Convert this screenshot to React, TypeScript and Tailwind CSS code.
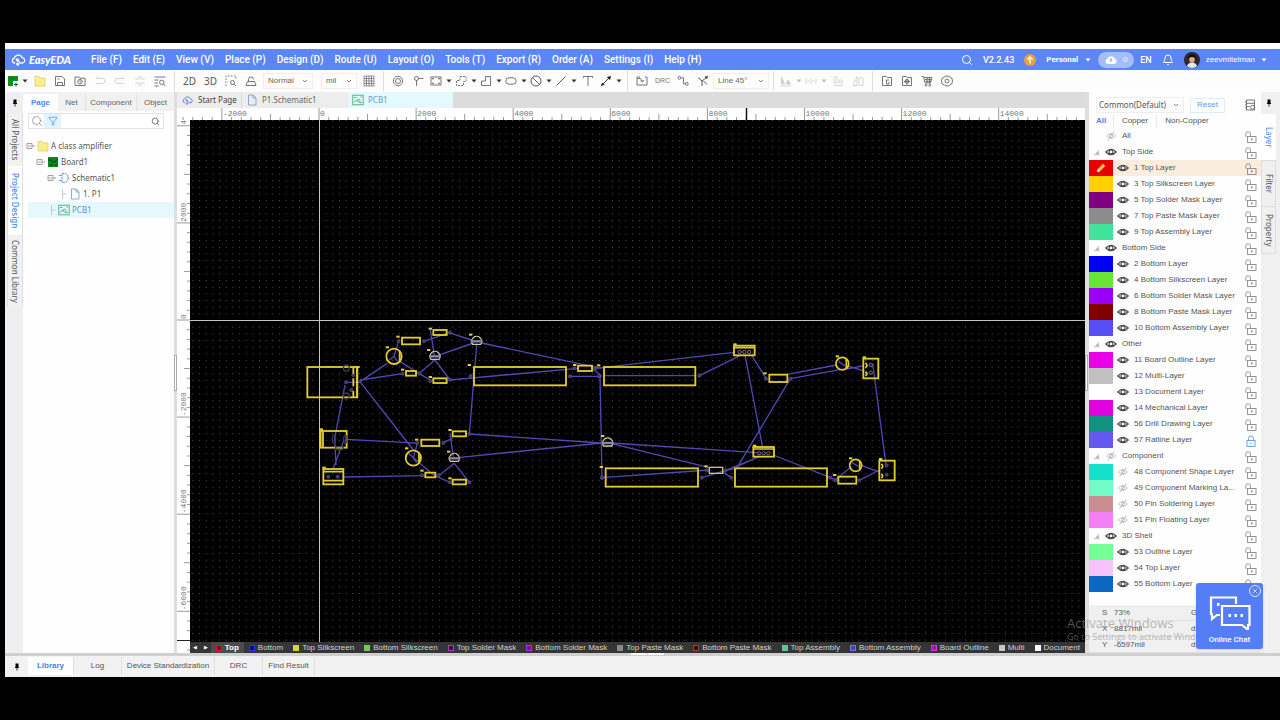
import React from "react";
import { Bell, Search, Funnel, X } from "lucide-react";

const SANS = "font-['Liberation_Sans',Arial,sans-serif]";
const NOTO = "font-['Noto_Sans','Open_Sans',sans-serif]";

/* ---------- icons ---------- */

type IconProps = { children: React.ReactNode; className?: string };

function Icon({ children, className = "size-3 text-[#666]" }: IconProps) {
  return (
    <svg viewBox="0 0 12 12" fill="none" stroke="currentColor" strokeWidth="0.9" className={`${className} shrink-0`} aria-hidden="true">
      {children}
    </svg>
  );
}

function Caret({ className = "text-[#333]" }: { className?: string }) {
  return (
    <svg viewBox="0 0 6 4" className={`h-1 w-[6px] shrink-0 ${className}`} aria-hidden="true">
      <path d="M0.5 0.5h5L3 3.5z" fill="currentColor" />
    </svg>
  );
}

function Eye({ off = false }: { off?: boolean }) {
  if (off) {
    return (
      <Icon className="size-3 text-[#bbb]">
        <path d="M1.5 6Q6 1 10.5 6Q6 11 1.5 6zM2.500 10.500L9.500 1.500" />
        <circle cx="6" cy="6" r="1.600" />
      </Icon>
    );
  }
  return (
    <Icon className="size-3 text-[#444]">
      <path d="M0.800 6Q6 0.800 11.200 6Q6 11.200 0.800 6z" strokeWidth="1.100" />
      <circle cx="6" cy="6" r="2" strokeWidth="1.100" />
    </Icon>
  );
}

function Lock({ closed = false }: { closed?: boolean }) {
  if (closed) {
    return (
      <Icon className="size-3 text-[#5b9be8]">
        <rect x="2" y="5.500" width="8" height="6" />
        <path d="M3.500 5.500V3.500a2.500 2.500 0 0 1 5 0v2M6 7.500v2" />
      </Icon>
    );
  }
  return (
    <Icon className="size-3 text-[#8a8a8a]">
      <rect x="2.500" y="5.500" width="8.500" height="6" />
      <path d="M0.800 5.800V3a2.300 2.300 0 0 1 4.600 0v2.500" />
      <path d="M6.700 7.300v2" strokeWidth="1.500" />
    </Icon>
  );
}

function Pin() {
  return (
    <svg viewBox="0 0 6 8" className="h-2 w-[6px] text-black" fill="currentColor" aria-hidden="true">
      <path d="M1.500 0.500h3v3.500h0.500v1H3.400v2.500h-0.800V5H1V4h0.500z" />
    </svg>
  );
}

function CloudLogo({ className }: { className: string }) {
  return (
    <svg viewBox="0 0 18 14" fill="none" stroke="currentColor" strokeWidth="1.500" className={className} aria-hidden="true">
      <path d="M4.500 10.500H3.800A2.900 2.900 0 0 1 3.500 4.800A5 5 0 0 1 12.800 4.300A3.200 3.200 0 0 1 13.500 10.500H10.500L7.500 7.500" />
      <circle cx="7" cy="6.800" r="1.200" />
      <circle cx="7.500" cy="11.800" r="1.200" />
    </svg>
  );
}

function FolderIcon() {
  return (
    <svg viewBox="0 0 12 12" className="size-3 shrink-0" aria-hidden="true">
      <path d="M1 1.500h4l1 1.500h5v8H1z" fill="#fbee8e" stroke="#d9c95a" strokeWidth="0.700" />
    </svg>
  );
}

function BoardIcon() {
  return (
    <svg viewBox="0 0 12 12" className="size-3 shrink-0" aria-hidden="true">
      <rect x="1" y="1" width="10" height="10" fill="#0b8a1c" />
      <path d="M1 4h3l1.500 2H8l1.500-2H11M3 9h3M8 9h2" stroke="#063f0d" strokeWidth="1" fill="none" />
    </svg>
  );
}

function PageIcon() {
  return (
    <Icon className="size-3 text-[#7f9fd8]">
      <path d="M2.500 1h4.500l3 3v7h-7.500zM7 1v3h3" />
    </Icon>
  );
}

function PcbIcon() {
  return (
    <Icon className="size-3 text-[#4aae7a]">
      <rect x="0.800" y="1.200" width="10.400" height="9.600" />
      <path d="M2 3.500h2.500M8.500 3h1.500M2 8.500L4 6.200h1.500M7.500 8.500h2.500" />
      <circle cx="6.600" cy="6.600" r="1.400" />
    </Icon>
  );
}

function SchematicIcon() {
  return (
    <Icon className="size-3 text-[#5f8fc8]">
      <path d="M4 1.500h3.500q2.500 1 2.500 4.500t-2.500 4.500H4zM1 3.500h3M1 8.500h3M10 6h1.500" strokeDasharray="2.500 0.500" />
    </Icon>
  );
}

/* ---------- header ---------- */

const MENUS = [
  "File (F)", "Edit (E)", "View (V)", "Place (P)", "Design (D)", "Route (U)",
  "Layout (O)", "Tools (T)", "Export (R)", "Order (A)", "Settings (I)", "Help (H)",
];

function Header() {
  return (
    <header className="flex h-[21px] shrink-0 items-center bg-[#5c86f6] pr-[13px] pl-[6px] text-white">
      <a href="#home" className="flex w-20 items-center gap-[2px]">
        <CloudLogo className="h-3 w-4" />
        <span className="font-['Lato',sans-serif] text-[11px] leading-3 font-black italic">EasyEDA</span>
      </a>
      <nav className="flex gap-[11px] font-['Roboto',sans-serif] text-[10px] leading-3 font-medium">
        {MENUS.map((m) => (
          <button key={m} type="button" className="whitespace-nowrap">{m}</button>
        ))}
      </nav>
      <div className="ml-auto flex items-center text-[8px] leading-3 font-bold">
        <button type="button" aria-label="Search" className="mr-[10px]"><Search className="size-3" strokeWidth={2} /></button>
        <span className="mr-[10px] font-['Roboto',sans-serif] text-[9px] font-medium">V2.2.43</span>
        <svg viewBox="0 0 12 12" className="mr-[10px] size-3" aria-hidden="true">
          <circle cx="6" cy="6" r="6" fill="#e9a13b" />
          <path d="M6 9.500V3M3.200 5.600L6 2.800l2.800 2.800" fill="none" stroke="#fff" strokeWidth="1.300" />
        </svg>
        <button type="button" className="mr-[7px] flex items-center gap-[7px] font-['Roboto',sans-serif]">Personal <Caret className="text-white" /></button>
        <button type="button" className="mr-[6px] flex h-4 w-9 items-center justify-center gap-[6px] rounded-full bg-[#a5bdfa] font-normal">
          <svg viewBox="0 0 12 10" className="h-[10px] w-3" aria-hidden="true">
            <path d="M3 9a2.800 2.800 0 0 1-0.400-5.500A3.700 3.700 0 0 1 9.500 3.500A2.800 2.800 0 0 1 9.300 9z" fill="#fff" />
            <path d="M6 3.800v3.400M4.600 5.200L6 3.800l1.400 1.400" fill="none" stroke="#7f9ff5" strokeWidth="1" />
          </svg>
          0
        </button>
        <button type="button" className="mr-[10px] font-['Roboto',sans-serif] text-[9px] font-medium">EN</button>
        <button type="button" aria-label="Notifications" className="mr-[10px]"><Bell className="size-3" strokeWidth={2} /></button>
        <svg viewBox="0 0 16 16" className="mr-[6px] size-4" aria-hidden="true">
          <circle cx="8" cy="8" r="8" fill="#2a2730" />
          <path d="M3 14q1-3.500 5-3.500t5 3.500a8 8 0 0 1-10 0z" fill="#e9e6ea" />
          <ellipse cx="8" cy="7.300" rx="2.800" ry="3.500" fill="#e3a98f" />
          <path d="M4 8Q3.500 2.500 8 2.500T12 8Q11 5 8 5T4 8z" fill="#120e12" />
        </svg>
        <button type="button" className={`flex items-center gap-[6px] font-normal ${SANS}`}>
          zeevmitelman <Caret className="text-white" />
        </button>
      </div>
    </header>
  );
}

/* ---------- toolbar ---------- */

function Tool({ label, children, wide = false, faded = false }: { label: string; children: React.ReactNode; wide?: boolean; faded?: boolean }) {
  return (
    <button
      type="button"
      aria-label={label}
      className={`flex h-5 shrink-0 items-center justify-center ${wide ? "w-[25px] gap-1" : "w-5"} ${faded ? "opacity-30" : ""}`}
    >
      {children}
      {wide && <Caret />}
    </button>
  );
}

function Separator() {
  return <span className="mx-1 h-5 w-px shrink-0 bg-[#ddd]" />;
}

function ToolSelect({ label, value, className }: { label: string; value: string; className: string }) {
  return (
    <label className={`relative flex h-4 shrink-0 items-center border border-[#eee] ${className}`} aria-label={label}>
      <select aria-label={label} defaultValue={value} className={`h-[14px] w-full appearance-none bg-transparent pl-1 text-[8px] leading-[14px] text-[#666] outline-none ${SANS}`}>
        <option>{value}</option>
      </select>
      <svg viewBox="0 0 6 4" className="pointer-events-none absolute right-1 h-1 w-[6px] text-[#888]" fill="none" stroke="currentColor" aria-hidden="true">
        <path d="M1 1l2 2 2-2" />
      </svg>
    </label>
  );
}

function Toolbar() {
  return (
    <div className="flex h-[22px] shrink-0 items-center overflow-hidden bg-[#fdfdfd] text-[10px] text-[#555]">
      <button type="button" aria-label="New" className="flex h-5 w-[25px] shrink-0 items-center justify-center gap-[3px]">
        <svg viewBox="0 0 12 12" className="size-3" aria-hidden="true">
          <path d="M1 1h10v5H6v5H1z" fill="#0f8f22" />
          <path d="M7 9.500h4M9 7.500v4M3 3h3l2 2" stroke="#1a5f22" strokeWidth="1" fill="none" />
        </svg>
        <Caret />
      </button>
      <Tool label="Open"><FolderIcon /></Tool>
      <Tool label="Save"><Icon><path d="M1.500 1.500h6.500l2.500 2.500v6.500h-9zM3.500 10.500V7.500h5v3M3.500 4h2" /></Icon></Tool>
      <Tool label="Save as"><Icon><path d="M1 2h4l1 1.200h5v7.300H1z" /><circle cx="6" cy="6.700" r="2.300" /><path d="M6 5.300v1.600h1" /></Icon></Tool>
      <Tool label="Undo" faded><Icon><path d="M2 3.500h6.500a2 2 0 0 1 0 5H2M4 1.500l-2 2" /></Icon></Tool>
      <Tool label="Redo" faded><Icon><path d="M10 3.500H3.500a2 2 0 0 0 0 5H10M8 1.500l2 2" /></Icon></Tool>
      <Tool label="Array" faded><Icon><path d="M1 4h4V1M7 1v3h4M1 8h4v3M7 11V8h4" /></Icon></Tool>
      <Tool label="Find"><Icon><path d="M0.500 2h11M0.500 5h4M0.500 8h3.500M0.500 11h4" /><circle cx="7.800" cy="7.300" r="2.200" /><path d="M9.500 9l1.800 2" /></Icon></Tool>
      <Separator />
      <button type="button" className={`w-[21px] shrink-0 ${NOTO}`}>2D</button>
      <button type="button" className={`w-[21px] shrink-0 ${NOTO}`}>3D</button>
      <Tool label="Zoom area"><Icon><path d="M1 11V1h10v4" strokeDasharray="1.500 1.500" /><circle cx="7.500" cy="7.500" r="2" /><path d="M9 9l2 2" /></Icon></Tool>
      <Tool label="Grade"><Icon><path d="M1 10.500h10L9.500 6.500h-7zM3.500 6.500V4.500a2.500 2.500 0 0 1 5 0" /></Icon></Tool>
      <ToolSelect label="Mode" value="Normal" className="mr-2 ml-[2px] w-[50px]" />
      <ToolSelect label="Unit" value="mil" className="w-9 mr-[2px]" />
      <Tool label="Grid">
        <Icon><path d="M1 1h10v10H1zM1 3.500h10M1 6h10M1 8.500h10M3.500 1v10M6 1v10M8.500 1v10" strokeWidth="0.700" /></Icon>
      </Tool>
      <Separator />
      <Tool label="Via"><Icon><circle cx="6" cy="6" r="4.700" /><circle cx="6" cy="6" r="2.500" /></Icon></Tool>
      <Tool label="Pad"><Icon><circle cx="4.500" cy="3.500" r="2" /><path d="M4.500 5.500v5.500M6.500 3.500h5" /></Icon></Tool>
      <Tool label="Board outline" wide><Icon><rect x="1" y="2" width="10" height="8" /><path d="M2.500 4.500v-1h1.500M8 3.500h1.500v1M9.500 7.500v1H8M4 8.500H2.500v-1" /></Icon></Tool>
      <Tool label="Copper area" wide><Icon><path d="M5 1.500h6v5H8.500v4h-7v-5H5z" strokeDasharray="2 1" /></Icon></Tool>
      <Tool label="Fill region" wide><Icon><path d="M5.500 1.500h5v9h-9V6h4z" /></Icon></Tool>
      <Tool label="Slot" wide><Icon><rect x="0.800" y="2.800" width="10.400" height="6.400" rx="3.200" /></Icon></Tool>
      <Tool label="Keepout" wide><Icon className="size-3 text-[#444]"><circle cx="6" cy="6" r="5" /><path d="M2.500 2.500l7 7" /></Icon></Tool>
      <Tool label="Line" wide><Icon className="size-3 text-[#444]"><path d="M1.500 10.500l9-9" /></Icon></Tool>
      <Tool label="Text"><Icon><path d="M1.500 3V1.500h9V3M6 1.500V11" /></Icon></Tool>
      <Tool label="Measure" wide><Icon className="size-3 text-[#222]"><path d="M2 10l8-8M10.500 1.500l-3 0.800 2.200 2.200zM1.500 10.500l1-2.500 1.500 1.500z" fill="currentColor" /></Icon></Tool>
      <Separator />
      <Tool label="Import changes"><Icon><path d="M4 2H1v8h10V2H9M1.500 3.500Q5 2 6.500 6.500M4.500 5.500l2 1.500 1.200-2" /></Icon></Tool>
      <button type="button" className={`w-[21px] shrink-0 text-[7px] text-[#777] ${SANS}`}>DRC</button>
      <Tool label="Route"><Icon><circle cx="2.500" cy="2.800" r="1.400" /><path d="M4 2.800h2.500v6h2" /><circle cx="9.800" cy="8.800" r="1.400" /></Icon></Tool>
      <Tool label="Autoroute"><Icon className="size-3 text-[#444]"><path d="M1 2.500l4 3.500v5M5 6l5-4M10.500 1.200L8 2l1.700 1.700zM6.500 6l3.500 3.500" /></Icon></Tool>
      <ToolSelect label="Corner" value="Line 45°" className="w-14" />
      <Separator />
      <Tool label="Align" wide faded><Icon><path d="M1 11h10M1.500 9V2l3 7zM6 9h5L8 5z" fill="currentColor" /></Icon></Tool>
      <Tool label="Distribute" wide faded><Icon><path d="M1 3v6M6 3v6M11 3v6M2.500 6h2M7.500 6h2" /></Icon></Tool>
      <Tool label="Group" faded><Icon><path d="M1.500 10.500h9M2 8h3V2H2zM7 8h3V5H7z" /></Icon></Tool>
      <Tool label="Ungroup" faded><Icon><path d="M5 1.500v9H1l4-9M7 10.500V3h4v7.500z" /></Icon></Tool>
      <Separator />
      <Tool label="Gerber"><Icon><path d="M1.500 1.500h4l1 1h4v8h-9z" /><path d="M8 5H5.500v4H8V7" /></Icon></Tool>
      <Tool label="Pick and place"><Icon><path d="M1.500 1.500h4l1 1h4v8h-9z" /><circle cx="6" cy="6.500" r="2" /><path d="M6 3.500v6M3 6.500h6" /></Icon></Tool>
      <Tool label="Order"><Icon><path d="M0.500 1.500h2l1.500 6.500h5.500l1.500-5.500H3M4 4.500h6.500M4.500 6.300h5.500M6 2.500v5.500M8.500 2.500v5.500" /><circle cx="5" cy="10.200" r="0.900" /><circle cx="8.800" cy="10.200" r="0.900" /></Icon></Tool>
      <Tool label="Settings"><Icon><path d="M4 1.200h4l1 1.300 1.800 0.500 0.700 3-0.700 3-1.800 0.500-1 1.300H4L3 9.500 1.200 9 0.500 6l0.700-3L3 2.500z" /><circle cx="6" cy="6" r="2" /></Icon></Tool>
    </div>
  );
}

/* ---------- left side ---------- */

const SIDE_TABS = [
  { label: "All Projects", cls: "h-[53px] bg-[#f1f1f1] text-[#555]" },
  { label: "Project Design", cls: "h-[69px] bg-white font-medium text-[#3f86e8]" },
  { label: "Common Library", cls: "h-[72px] bg-[#f1f1f1] text-[#555]" },
];

const TREE = [
  { label: "A class amplifier", indent: "pl-[3px]", icon: <FolderIcon />, node: true },
  { label: "Board1", indent: "pl-[13px]", icon: <BoardIcon />, node: true },
  { label: "Schematic1", indent: "pl-[24px]", icon: <SchematicIcon />, node: true },
  { label: "1. P1", indent: "pl-[35px]", icon: <PageIcon />, node: false },
  { label: "PCB1", indent: "pl-[24px]", icon: <PcbIcon />, node: false, active: true },
];

function LeftPanel() {
  return (
    <aside className="flex shrink-0">
      <div className="flex w-[18px] flex-col bg-[#eeeff1] pl-[2px]">
        <button type="button" aria-label="Pin panel" className="flex h-[21px] items-center justify-center"><Pin /></button>
        {SIDE_TABS.map((t) => (
          <button
            key={t.label}
            type="button"
            className={`flex items-center justify-center border-y border-[#e0e0e0] text-[8px] leading-3 whitespace-nowrap [writing-mode:vertical-rl] ${NOTO} ${t.cls}`}
          >
            {t.label}
          </button>
        ))}
      </div>
      <div className={`w-[151px] bg-[#fefefe] text-[8px] leading-3 text-[#666] ${SANS}`}>
        <div className="flex h-[19px] items-stretch bg-[#f1f1f2] pt-[2px]">
          <button type="button" className="w-[35px] bg-white font-bold text-[#4a8bf0]">Page</button>
          <button type="button" className="w-7 border-r border-[#e2e2e2]">Net</button>
          <button type="button" className="w-[51px] border-r border-[#e2e2e2]">Component</button>
          <button type="button" className="flex-1">Object</button>
        </div>
        <div className="mt-[2px] ml-[5px] flex h-4 w-[136px] items-center border border-[#e2e2e2] bg-white">
          <button type="button" aria-label="Search" className="flex w-[15px] justify-center"><Search className="size-3 text-[#888]" strokeWidth={1.500} /></button>
          <button type="button" aria-label="Filter" className="flex h-full w-[17px] items-center justify-center bg-[#dff4fc]"><Funnel className="size-[10px] text-[#5a9be8]" /></button>
          <input aria-label="Filter pages" className="h-full min-w-0 flex-1 bg-transparent outline-none" />
          <Search className="mr-[3px] size-[9px] text-[#555]" />
        </div>
        <ul className={`mt-[9px] ${NOTO}`}>
          {TREE.map((t) => (
            <li key={t.label} className={`ml-[5px] ${t.active ? "bg-[#e6f8fb] text-[#5d93d0]" : "text-[#555]"}`}>
              <button type="button" className={`-ml-[5px] flex h-4 items-center gap-[2px] ${t.indent}`}>
                <svg viewBox="0 0 9 12" className="h-3 w-[9px]" fill="none" stroke="#888" strokeWidth="0.800" aria-hidden="true">
                  {t.node ? <path d="M1 3.500h5v5H1zM2 6h3M6 6h3" /> : <path d="M4.500 1v10M4.500 6h4" stroke="#bbb" />}
                </svg>
                {t.icon}
                <span className="whitespace-nowrap">{t.label}</span>
              </button>
            </li>
          ))}
        </ul>
      </div>
      <div className="flex w-[3px] items-center bg-[#dedede]"><span className="h-9 w-[3px] border border-[#aaa] bg-white" /></div>
    </aside>
  );
}

/* ---------- canvas ---------- */

const MAJOR = 97.1;

function HorizontalRuler() {
  const ticks = Array.from({ length: 120 }, (_, i) => i - 14);
  return (
    <svg className="h-3 w-full bg-white" aria-hidden="true">
      <g transform="translate(142 0)">
        {ticks.map((i) => (
          <path key={i} d={`M${(i * MAJOR) / 10} 12v${i % 10 === 0 ? -12 : i % 5 === 0 ? -6 : -3}`} stroke="#999" strokeWidth="1" />
        ))}
        {Array.from({ length: 12 }, (_, i) => i - 1).map((i) => (
          <text key={i} x={i * MAJOR + 1} y="8" fontSize="8" fill="#777" fontFamily="Liberation Mono, monospace">{i * 2000}</text>
        ))}
      </g>
      <path d="M569.500 0v12" stroke="#111" strokeWidth="1.500" />
    </svg>
  );
}

function VerticalRuler() {
  const ticks = Array.from({ length: 90 }, (_, i) => i - 20);
  return (
    <svg className="h-full w-[13px] shrink-0 bg-white" aria-hidden="true">
      <g transform="translate(0 200)">
        {ticks.map((i) => (
          <path key={i} d={`M13 ${(i * MAJOR) / 10}h${i % 10 === 0 ? -13 : i % 5 === 0 ? -6 : -3}`} stroke="#999" strokeWidth="1" />
        ))}
        {[2, 1, 0, -1, -2, -3].map((i) => (
          <text key={i} transform={`translate(9 ${-i * MAJOR - 1}) rotate(-90)`} fontSize="8" fill="#777" fontFamily="Liberation Mono, monospace">{i * 2000}</text>
        ))}
      </g>
      <path d="M0 520.500h13" stroke="#222" strokeWidth="1" />
    </svg>
  );
}

type Box = [number, number, number, number];

const LEFT_BOXES: Box[] = [
  [22, 156, 150, 91], [62, 348, 78, 50], [70, 462, 60, 46], [306, 68, 54, 20], [400, 45, 40, 15],
  [318, 168, 30, 14], [400, 190, 40, 14], [364, 374, 54, 19], [458, 349, 40, 15], [376, 473, 30, 14],
  [458, 494, 40, 14], [834, 152, 42, 16], [522, 156, 276, 55],
];
const RIGHT_BOXES: Box[] = [
  [42, 96, 274, 55], [47, 400, 277, 55], [435, 400, 276, 55], [432, 32, 62, 29], [490, 336, 62, 29],
  [538, 119, 54, 22], [820, 71, 45, 59], [868, 377, 46, 59], [745, 425, 54, 21],
];
const LEFT_MARKS = [
  [294, 65], [262, 97], [391, 41], [386, 105], [512, 59], [508, 150], [308, 164], [391, 186], [350, 374],
  [320, 400], [450, 345], [446, 410], [366, 467], [450, 490], [824, 150], [174, 156], [64, 343], [72, 458],
];
const RIGHT_MARKS = [
  [26, 91], [38, 303], [34, 396], [435, 28], [494, 332], [525, 115], [742, 64], [823, 67], [782, 370], [872, 372], [734, 420], [348, 394],
];
const LEFT_PADS = [
  [296, 78], [372, 79], [450, 53], [308, 176], [358, 176], [391, 198], [450, 194], [512, 183], [810, 184], [898, 184],
  [352, 384], [430, 384], [508, 357], [366, 481], [416, 481], [508, 502], [450, 502], [824, 160], [886, 160], [906, 488],
  [85, 485], [113, 485], [160, 180], [154, 225], [138, 202],
];
const RIGHT_PADS = [
  [15, 101], [28, 122], [328, 122], [528, 131], [601, 131], [36, 428], [335, 428], [424, 428], [721, 428], [736, 436], [808, 436], [350, 406], [407, 406], [890, 391], [890, 419],
];

function Parts({ boxes, marks, pads }: { boxes: Box[]; marks: number[][]; pads: number[][] }) {
  return (
    <>
      {pads.map(([x, y], i) => (
        <circle key={i} cx={x} cy={y} r="4.500" fill="#352e6e" stroke="#5f5890" strokeWidth="2.500" />
      ))}
      {boxes.map(([x, y, w, h], i) => (
        <rect key={i} x={x} y={y} width={w} height={h} fill="none" stroke="#e0cc2e" strokeWidth="5.500" />
      ))}
      {marks.map(([x, y], i) => (
        <rect key={i} x={x - 5} y={y - 3} width="10" height="6" fill="#e3cf2f" />
      ))}
    </>
  );
}

function Transistor({ x, y }: { x: number; y: number }) {
  return (
    <g fill="none" strokeWidth="4">
      <path d={`M${x - 12} ${y + 11}A15 15 0 1 1 ${x + 12} ${y + 11}z`} stroke="#d3c98a" />
      <path d={`M${x - 18} ${y + 2}h36`} stroke="#8a86b4" strokeWidth="7" />
    </g>
  );
}

function BoardDrawing() {
  return (
    <svg className="block size-full bg-black" role="img" aria-label="PCB layout">
      <defs>
        <pattern id="dots" width="6.66" height="6.66" patternUnits="userSpaceOnUse" x="129" y="200">
          <rect x="0" y="0" width="1" height="1" fill="#565656" />
        </pattern>
      </defs>
      <rect width="100%" height="100%" fill="url(#dots)" />
      <g transform="translate(110 195) scale(0.33333)">
        <path
          fill="none"
          stroke="#5347b4"
          strokeWidth="4"
          d="M296 78L282 124L268 135M372 79L447 53L515 75M391 45L403 120M412 122L520 84M545 84L905 160M530 90L508 357M405 135L358 175M405 135L450 195L834 160M300 140L358 176L395 198M308 176L180 195M262 145L180 200L340 405M138 202L180 202M135 210L104 370L108 450M132 375L100 460M140 373L352 384L340 430M325 415L400 480L450 502M430 383L458 370M508 357L905 384M480 427L905 384M463 445L415 484M463 445L508 502M450 355L460 425M130 486L375 482M810 184L905 184M900 180L906 490M876 160L905 184M282 124l10 14M340 429l10 14"
        />
        <Parts boxes={LEFT_BOXES} marks={LEFT_MARKS} pads={LEFT_PADS} />
        <g fill="none" stroke="#e0cc2e" strokeWidth="5.500">
          <path d="M160 156v20M160 190v24M160 228v19M171 156v91M69 348v50M70 470h60M70 497h60M299 108v32M357 412v32" />
          <circle cx="282" cy="124" r="23" />
          <circle cx="340" cy="429" r="23" />
        </g>
        <g fill="none" stroke="#3b3a4d" strokeWidth="4">
          <circle cx="139" cy="159" r="9" />
          <circle cx="139" cy="243" r="9" />
          <ellipse cx="102" cy="373" rx="5" ry="12" />
          <ellipse cx="136" cy="373" rx="5" ry="12" />
          <ellipse cx="118" cy="400" rx="12" ry="5" />
        </g>
        <Transistor x={405} y={122} />
        <Transistor x={530} y={77} />
        <Transistor x={463} y={428} />
      </g>
      <g transform="translate(400 215) scale(0.33333)">
        <path
          fill="none"
          stroke="#5347b4"
          strokeWidth="4"
          d="M15 100L432 52M328 122L450 62M42 122H316M465 60L518 338M485 61L528 130M592 118L740 90M601 131L770 100M770 92L822 108M770 102L822 92M848 85L888 390M601 131L440 400L407 406M65 324L500 353M65 326L358 398M36 428L358 405M335 428L407 406M398 410L424 428M407 406L505 366M440 395L500 368M550 360L721 428L736 434L784 395M810 390L870 412M808 436L868 405M745 80l20 12M785 382l20 12"
        />
        <Parts boxes={RIGHT_BOXES} marks={RIGHT_MARKS} pads={RIGHT_PADS} />
        <rect x="358" y="397" width="40" height="18" fill="none" stroke="#c9c27a" strokeWidth="4" />
        <g fill="none" stroke="#e0cc2e" strokeWidth="5">
          <path d="M432 38h62M490 342h62M769 72v28M809 377v28M826 84q10 8 0 14M826 110q10 6 0 12M874 387q8 6 0 14M874 417q8 6 0 12" />
          <circle cx="757" cy="86" r="19" />
          <circle cx="797" cy="391" r="18" />
        </g>
        <g fill="none" stroke="#77709c" strokeWidth="3">
          <circle cx="449" cy="51" r="5" /><circle cx="463" cy="51" r="5" /><circle cx="477" cy="51" r="5" />
          <circle cx="507" cy="355" r="5" /><circle cx="521" cy="355" r="5" /><circle cx="535" cy="355" r="5" />
          <circle cx="842" cy="90" r="5" /><circle cx="842" cy="113" r="5" />
        </g>
        <Transistor x={53} y={322} />
      </g>
      <path d="M0 200.500H3000" stroke="#c4c4c4" strokeWidth="1" />
      <path d="M129.500 0V3000" stroke="#c4c4c4" strokeWidth="1" />
    </svg>
  );
}

const LAYER_TABS = [
  ["Top", "border-[#e0102f] bg-[#8c0c20]"],
  ["Bottom", "border-[#3a30e8] bg-[#0d0a8c]"],
  ["Top Silkscreen", "border-[#d5d33c] bg-[#d5d33c]"],
  ["Bottom Silkscreen", "border-[#78c850] bg-[#78c850]"],
  ["Top Solder Mask", "border-[#a04aa8] bg-[#3a103e]"],
  ["Bottom Solder Mask", "border-[#b030f0] bg-[#7010a8]"],
  ["Top Paste Mask", "border-[#8a8a8a] bg-[#8a8a8a]"],
  ["Bottom Paste Mask", "border-[#a04040] bg-[#3c0808]"],
  ["Top Assembly", "border-[#58c8a0] bg-[#58c8a0]"],
  ["Bottom Assembly", "border-[#7a70f0] bg-[#4a40b0]"],
  ["Board Outline", "border-[#e030e0] bg-[#b010b0]"],
  ["Multi", "border-[#c8c8c8] bg-[#c8c8c8]"],
  ["Document", "border-white bg-white"],
];

function Workspace() {
  return (
    <main className="flex min-w-0 flex-1 flex-col">
      <div className={`flex h-4 bg-[#dcdcdc] text-[8px] leading-3 text-[#666] ${NOTO}`}>
        <button type="button" className="flex w-[65px] items-center gap-1 border-r border-[#ddd] bg-[#ededed] pl-[5px] whitespace-nowrap text-[#444]"><CloudLogo className="h-[9px] w-3 text-[#5b7fe0]" />Start Page</button>
        <button type="button" className="flex w-[106px] items-center gap-1 bg-[#ededed] pl-1 whitespace-nowrap"><PageIcon />P1.Schematic1</button>
        <button type="button" className="flex w-[105px] items-center gap-1 bg-[#e3f9fd] pl-1 text-[#5d9fd6]"><PcbIcon />PCB1</button>
      </div>
      <HorizontalRuler />
      <div className="flex min-h-0 flex-1">
        <VerticalRuler />
        <div className="flex min-w-0 flex-1 flex-col">
          <div className="min-h-0 flex-1 overflow-hidden"><BoardDrawing /></div>
          <div className={`flex h-[11px] shrink-0 overflow-hidden bg-[#353535] text-[8px] leading-[11px] text-[#d0d0d0] ${SANS}`}>
            <button type="button" aria-label="Previous layer" className="w-[14px] text-[5px] text-white">◀</button>
            <button type="button" aria-label="Next layer" className="w-[14px] text-[5px] text-white">▶</button>
            {LAYER_TABS.map(([name, color], i) => (
              <button key={name} type="button" className={`flex shrink-0 items-center gap-[3px] px-[5px] whitespace-nowrap ${i === 0 ? "bg-[#4c4c4c] font-bold text-white" : ""}`}>
                <span className={`size-[6px] border ${color}`} />{name}
              </button>
            ))}
          </div>
        </div>
      </div>
    </main>
  );
}

/* ---------- right side ---------- */

type Row = { name: string; color?: string; off?: boolean; locked?: boolean; active?: boolean };

const ROWS: Row[] = [
  { name: "Top Side" },
  { name: "1 Top Layer", color: "bg-[#e60000]", active: true },
  { name: "3 Top Silkscreen Layer", color: "bg-[#ffd000]" },
  { name: "5 Top Solder Mask Layer", color: "bg-[#800080]" },
  { name: "7 Top Paste Mask Layer", color: "bg-[#8c8c8c]" },
  { name: "9 Top Assembly Layer", color: "bg-[#3fe39a]" },
  { name: "Bottom Side" },
  { name: "2 Bottom Layer", color: "bg-[#0000f5]" },
  { name: "4 Bottom Silkscreen Layer", color: "bg-[#66e533]" },
  { name: "6 Bottom Solder Mask Layer", color: "bg-[#9a00f5]" },
  { name: "8 Bottom Paste Mask Layer", color: "bg-[#800000]" },
  { name: "10 Bottom Assembly Layer", color: "bg-[#574df5]" },
  { name: "Other" },
  { name: "11 Board Outline Layer", color: "bg-[#e800e8]" },
  { name: "12 Multi-Layer", color: "bg-[#c0c0c0]" },
  { name: "13 Document Layer", color: "bg-white" },
  { name: "14 Mechanical Layer", color: "bg-[#e000e0]" },
  { name: "56 Drill Drawing Layer", color: "bg-[#129080]" },
  { name: "57 Ratline Layer", color: "bg-[#6458f0]", locked: true },
  { name: "Component", off: true },
  { name: "48 Component Shape Layer", color: "bg-[#14e0cc]", off: true },
  { name: "49 Component Marking La...", color: "bg-[#70fcc4]", off: true },
  { name: "50 Pin Soldering Layer", color: "bg-[#c98d92]", off: true },
  { name: "51 Pin Floating Layer", color: "bg-[#f580f5]", off: true },
  { name: "3D Shell" },
  { name: "53 Outline Layer", color: "bg-[#74ff94]" },
  { name: "54 Top Layer", color: "bg-[#f6c2fa]" },
  { name: "55 Bottom Layer", color: "bg-[#0d66c2]" },
];

function LayerRow({ row }: { row: Row }) {
  return (
    <li className={`flex h-4 items-center pr-1 ${row.active ? "bg-[#faeddd]" : ""}`}>
      {row.color ? (
        <span className={`mr-1 flex h-4 w-6 shrink-0 items-center justify-center ${row.color}`}>
          {row.active && (
            <svg viewBox="0 0 12 12" className="size-3" aria-hidden="true">
              <path d="M2 10l0.800-3L8 1.800l2.300 2.300L5 9.300z" fill="#ffc04a" />
              <path d="M2 10l0.800-3 2.200 2.300z" fill="#fff" />
            </svg>
          )}
        </span>
      ) : (
        <span className="mr-[1px] flex w-[15px] shrink-0 justify-center">
          {row.name !== "All" && (
            <svg viewBox="0 0 6 6" className="size-[5px]" aria-hidden="true"><path d="M6 0v6H0z" fill="#bbb" /></svg>
          )}
        </span>
      )}
      <button type="button" aria-label={`Toggle ${row.name}`} className="mr-[5px] shrink-0"><Eye off={row.off} /></button>
      <span className="whitespace-nowrap">{row.name}</span>
      <button type="button" aria-label={`Lock ${row.name}`} className="mt-[2px] ml-auto shrink-0"><Lock closed={row.locked} /></button>
    </li>
  );
}

const STATUS = [["S", "73%", "G"], ["X", "8817mil", "dX"], ["Y", "-6597mil", "dY"]];

function RightPanel() {
  return (
    <aside className={`flex shrink-0 text-[8px] leading-3 text-[#555] ${SANS}`}>
      <div className="flex w-1 items-center bg-[#dedede]"><span className="h-9 w-[3px] border border-[#aaa] bg-white" /></div>
      <div className="flex w-[172px] flex-col bg-[#fefefe]">
        <div className="flex items-center pt-[5px] pr-[5px] pl-[7px]">
          <label className="relative flex h-4 w-[88px] items-center border border-[#eee]">
            <select aria-label="Layer preset" defaultValue="Common(Default)" className={`h-[14px] w-full appearance-none bg-transparent pl-[2px] text-[8px] leading-[14px] outline-none ${NOTO}`}>
              <option>Common(Default)</option>
            </select>
            <svg viewBox="0 0 6 4" className="pointer-events-none absolute right-1 h-1 w-[6px]" fill="none" stroke="#888" aria-hidden="true"><path d="M1 1l2 2 2-2" /></svg>
          </label>
          <button type="button" className="ml-[6px] h-[15px] w-[35px] border border-[#dcecff] text-[#5b9be8]">Reset</button>
          <button type="button" aria-label="Layer manager" className="ml-auto">
            <Icon><path d="M2.500 1h8v10h-8zM1 3h1.500M1 6h1.500M1 9h1.500M2.500 4.300h8M2.500 7.500h3" /><circle cx="8.500" cy="8.300" r="2" /></Icon>
          </button>
        </div>
        <div className="mt-[2px] flex h-3 items-center">
          <button type="button" className="w-[25px] border-r border-[#e5e5e5] font-bold text-[#3f86e8]">All</button>
          <button type="button" className="w-[43px] border-r border-[#e5e5e5]">Copper</button>
          <button type="button" className="w-[60px]">Non-Copper</button>
        </div>
        <ul className="mt-px">
          <LayerRow row={{ name: "All", off: true }} />
          {ROWS.map((r) => <LayerRow key={r.name} row={r} />)}
        </ul>
        <dl className="mt-auto bg-[#f0f0f1]">
          {STATUS.map(([k, v, d]) => (
            <div key={k} className="flex h-4 items-center border-b border-[#e2e2e2] pl-[13px]">
              <dt className="w-3">{k}</dt>
              <dd className="w-[77px]">{v}</dd>
              <dd>{d}</dd>
            </div>
          ))}
        </dl>
      </div>
      <div className={`w-[19px] bg-[#f0f0f0] pr-1 text-[8px] ${NOTO}`}>
        <button type="button" aria-label="Pin panel" className="flex h-[22px] w-full items-center justify-center"><Pin /></button>
        <button type="button" className="flex h-[46px] w-full items-center justify-center bg-white text-[#3f86e8] [writing-mode:vertical-rl]">Layer</button>
        <button type="button" className="flex h-[47px] w-full items-center justify-center border border-[#ddd] [writing-mode:vertical-rl]">Filter</button>
        <button type="button" className="flex h-[47px] w-full items-center justify-center border border-t-0 border-[#ddd] [writing-mode:vertical-rl]">Property</button>
      </div>
    </aside>
  );
}

/* ---------- bottom and overlays ---------- */

const BOTTOM_TABS = [
  ["Library", "w-[46px] bg-white text-[#3f86e8] font-semibold"],
  ["Log", "w-12"],
  ["Device Standardization", "w-[93px]"],
  ["DRC", "w-12"],
  ["Find Result", "w-[52px]"],
];

function BottomBar() {
  return (
    <footer className={`relative flex h-6 shrink-0 border-t-[3px] border-[#cfcfcf] bg-[#f2f2f2] text-[8px] leading-3 text-[#555] ${SANS}`}>
      <span className="absolute -top-[3px] left-1/2 flex -translate-x-3 gap-px"><i className="h-[2px] w-4 bg-white" /><i className="h-[2px] w-4 bg-white" /></span>
      <button type="button" aria-label="Pin panel" className="flex w-[23px] items-center justify-center"><Pin /></button>
      {BOTTOM_TABS.map(([name, cls]) => (
        <button key={name} type="button" className={`mt-px h-[18px] border-r border-[#e0e0e0] whitespace-nowrap ${cls}`}>{name}</button>
      ))}
    </footer>
  );
}

function OnlineChat() {
  return (
    <button type="button" className="absolute right-[17px] bottom-7 flex h-[66px] w-[67px] flex-col items-center justify-end rounded-[3px] bg-[#557df5] pb-[3px] text-white shadow">
      <span className="absolute top-[2px] right-[2px] rounded-full border border-white/80 p-px"><X className="size-2" strokeWidth={2} /></span>
      <svg viewBox="0 0 42 34" className="h-[34px] w-[42px]" fill="none" stroke="#fff" strokeWidth="2.200" aria-hidden="true">
        <path d="M27 8V1.500H2V18h1v5l5-4h3" />
        <path d="M13 10h27.500v19H39v5l-6-5H13z" />
        <path d="M8 8.500h2.500" strokeWidth="3" />
        <path d="M19.500 19.500h2.500M25.500 19.500h2.500M31.500 19.500h2.500" strokeWidth="3" />
      </svg>
      <span className="mt-1 font-['Roboto',sans-serif] text-[8px] leading-3 font-medium">Online Chat</span>
    </button>
  );
}

export default function App() {
  return (
    <div className="flex min-h-screen flex-col bg-black pt-[43px] pb-[43px] pl-[5px]">
      <div className={`relative flex flex-1 flex-col bg-white pt-[6px] ${SANS}`}>
        <Header />
        <Toolbar />
        <div className="flex flex-1 overflow-hidden">
          <LeftPanel />
          <Workspace />
          <RightPanel />
        </div>
        <BottomBar />
        <div className="pointer-events-none absolute right-[68px] bottom-[34px] w-[145px] overflow-hidden font-['Open_Sans',sans-serif] whitespace-nowrap text-[#888]/60">
          <p className="text-[13px] leading-[15px]">Activate Windows</p>
          <p className="text-[9px] leading-3">Go to Settings to activate Windows.</p>
        </div>
        <OnlineChat />
      </div>
    </div>
  );
}
